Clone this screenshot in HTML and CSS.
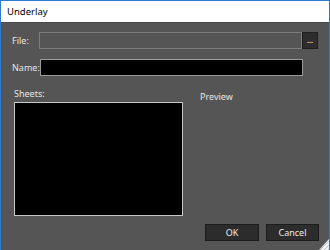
FILE: index.html
```html
<!DOCTYPE html>
<html>
<head>
<meta charset="utf-8">
<link rel="stylesheet" href="styles.css">
</head>
<body>
<div class="window">
  <div class="titlebar">Underlay</div>
  <div class="content">
    <div class="row">
      <span class="label">File:</span>
      <div class="input disabled"></div>
      <button class="browse">...</button>
    </div>
    <div class="row row-name">
      <span class="label">Name:</span>
      <div class="input dark"></div>
    </div>
    <div class="columns">
      <div class="sheets">
        <div class="sheets-label">Sheets:</div>
        <div class="listbox"></div>
      </div>
      <div class="preview">Preview</div>
    </div>
    <div class="buttons">
      <button class="btn">OK</button>
      <button class="btn">Cancel</button>
    </div>
  </div>
  <div class="grip"></div>
</div>
</body>
</html>
```

FILE: styles.css
```css
html, body {
  margin: 0;
  padding: 0;
  background: #555555;
}
.window {
  position: relative;
  width: 330px;
  height: 250px;
  box-sizing: border-box;
  border: 1px solid #2b7bd3;
  border-bottom: none;
  background: #555555;
  font-family: "Noto Sans", "Open Sans", sans-serif;
  color: #e6e6e6;
  display: flex;
  flex-direction: column;
}
.titlebar {
  height: 21px;
  background: #ffffff;
  color: #000;
  font-size: 9.5px;
  line-height: 22px;
  padding-left: 6px;
  border-bottom: 1px solid #4a4a4a;
}
.content {
  flex: 1;
  display: flex;
  flex-direction: column;
  padding: 9px 10px 0 10px;
}
.row {
  display: flex;
  align-items: center;
  height: 17px;
}
.row-name {
  margin-top: 10px;
}
.label {
  flex: 0 0 28px;
  font-size: 9px;
  padding-left: 1px;
  box-sizing: border-box;
}
.input {
  box-sizing: border-box;
  width: 263px;
  height: 17px;
}
.input.disabled {
  border: 1px solid #7c7c7c;
  background: #555555;
}
.input.dark {
  border: 1px solid #9a9a9a;
  background: #000;
}
.browse {
  box-sizing: border-box;
  width: 16px;
  height: 17px;
  margin: 0;
  padding: 0;
  background: #2d2d2d;
  border: 1px solid #1f1f1f;
  color: #e8e8e8;
  font-family: "Noto Sans", sans-serif;
  font-size: 7px;
  line-height: 10px;
  font-weight: bold;
}
.columns {
  display: flex;
  margin-top: 11px;
}
.sheets {
  display: flex;
  flex-direction: column;
  padding-left: 3px;
}
.sheets-label {
  font-size: 9px;
  line-height: 13px;
  height: 15px;
}
.listbox {
  box-sizing: border-box;
  width: 169px;
  height: 114px;
  background: #000;
  border: 1px solid #c8c8c8;
}
.preview {
  font-size: 9px;
  margin-left: 17px;
  margin-top: 3px;
}
.buttons {
  display: flex;
  justify-content: flex-end;
  gap: 7px;
  margin-top: 8px;
}
.btn {
  box-sizing: border-box;
  height: 17px;
  width: 54px;
  margin: 0;
  padding: 0;
  background: #2c2c2c;
  border: 1px solid #1c1c1c;
  color: #ececec;
  font-family: "Noto Sans", sans-serif;
  font-size: 9px;
  line-height: 14px;
}
.btn + .btn {
  width: 53px;
}
.grip {
  position: absolute;
  right: 0;
  bottom: 0;
  width: 10px;
  height: 11px;
  background:
    repeating-linear-gradient(135deg, #f4f4f4 0 2px, #bdbdbd 2px 3px);
  clip-path: polygon(100% 0, 100% 100%, 0 100%);
}
```
